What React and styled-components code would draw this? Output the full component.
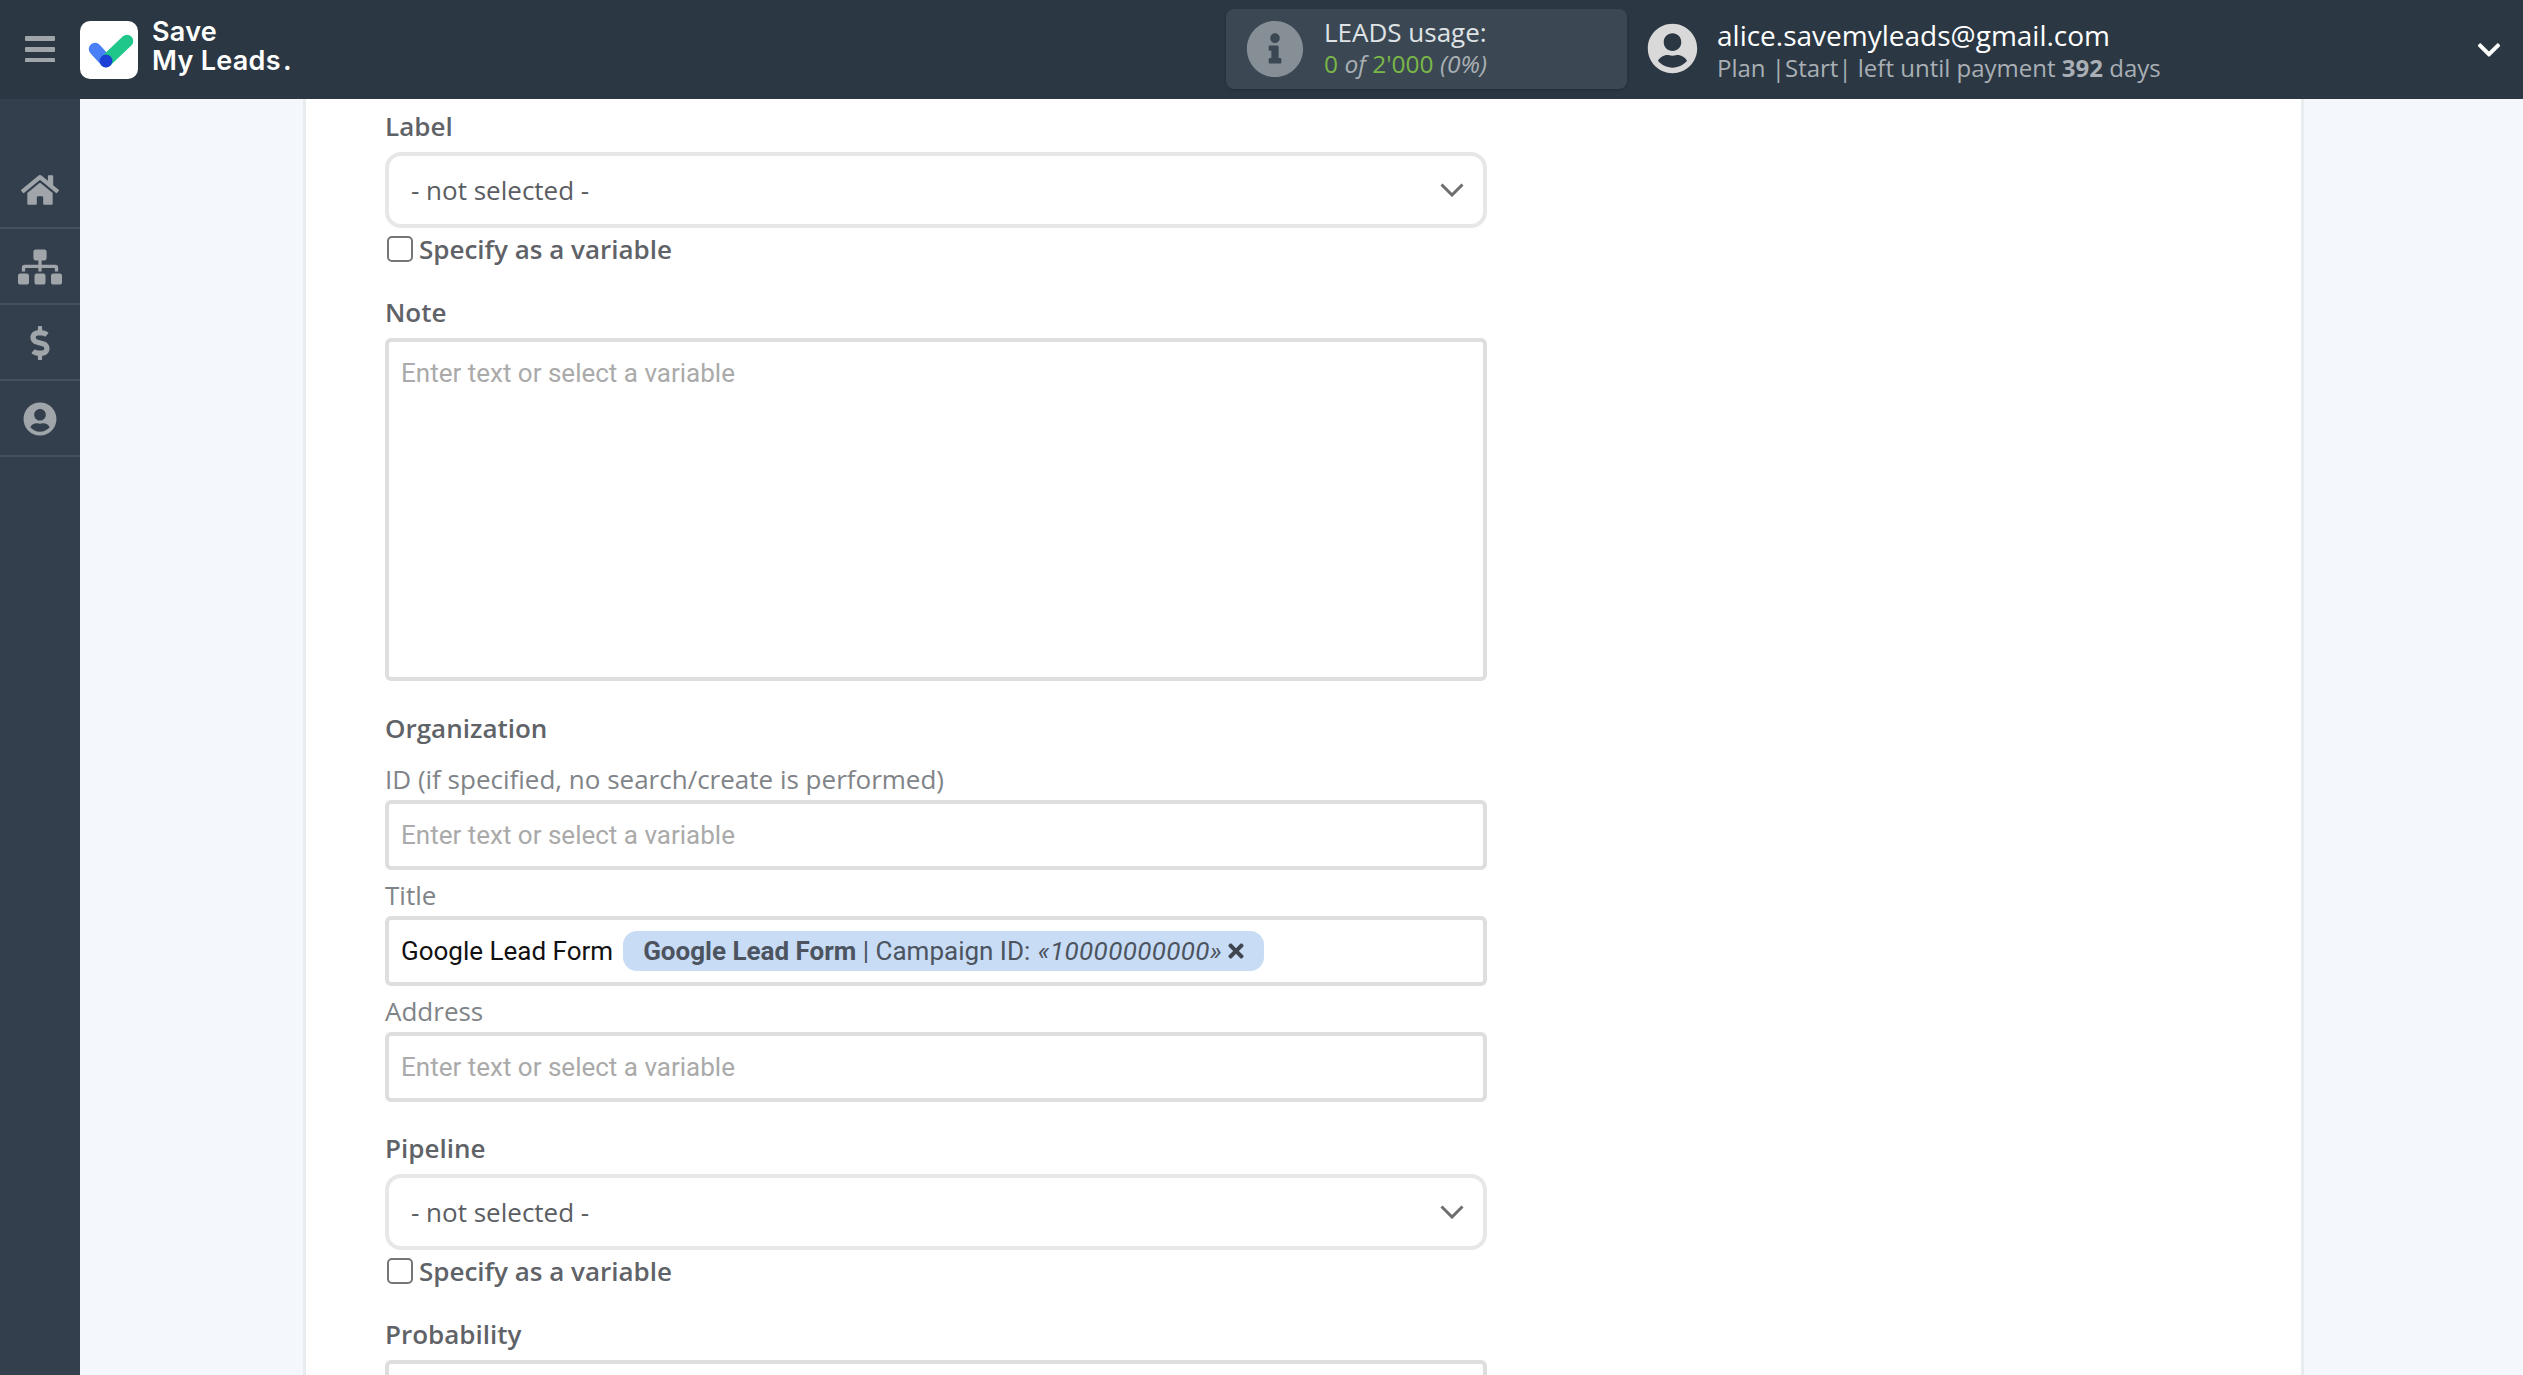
import React from 'react';
import styled, { createGlobalStyle } from 'styled-components';
import { FaHome, FaSitemap, FaDollarSign, FaUserCircle, FaInfoCircle, FaChevronDown, FaTimes } from 'react-icons/fa';

const Global = createGlobalStyle`
  html, body { margin: 0; height: 100%; overflow: hidden; background: #f4f7fc; }
  * { box-sizing: border-box; }
`;

const Page = styled.div`
  width: 2523px; height: 1375px; display: flex; flex-direction: column; overflow: hidden;
  font-family: "Open Sans", sans-serif;
`;
const Header = styled.header`
  height: 99px; flex: none; display: flex; align-items: center; background: #2b3743;
`;
const Burger = styled.svg`
  width: 30px; height: 26px; margin-left: 25px; margin-top: -1px; flex: none;
`;
const LogoMark = styled.svg`
  width: 58px; height: 58px; margin-left: 25px; flex: none;
`;
const LogoText = styled.div`
  margin: -8px 0 0 14px; width: 200px; color: #fff; font-family: Inter, sans-serif; font-weight: 600;
  font-size: 27px; line-height: 29px; letter-spacing: 0.3px; white-space: pre-line;
`;
const LogoDot = styled.span`
  margin-left: 2px;
`;
const Usage = styled.div`
  margin: -1px 0 0 874px; width: 401px; height: 80px; flex: none; border-radius: 8px; background: #3b4853;
  display: flex; align-items: center; padding-left: 20px; box-shadow: 0 1px 3px rgba(0,0,0,.2);
`;
const UsageIcon = styled(FaInfoCircle)`
  width: 58px; height: 58px; color: #868e96; flex: none;
`;
const UsageText = styled.div`
  margin: -3px 0 0 20px; display: flex; flex-direction: column; gap: 1px;
`;
const UsageTitle = styled.div`
  color: #dfe3e6; font-size: 26px; line-height: 32px;
`;
const UsageValue = styled.div`
  color: #a9afb4; font-size: 24.5px; line-height: 30px; font-style: italic;
`;
const Green = styled.span`
  color: #7ab648; font-style: normal;
`;
const Account = styled(FaUserCircle)`
  margin: -2px 0 0 20px; width: 51px; height: 51px; color: #d9d9d9; flex: none;
`;
const AccountText = styled.div`
  margin: -2px 0 0 19px; display: flex; flex-direction: column;
`;
const Email = styled.div`
  color: #fff; font-size: 28px; line-height: 38px;
`;
const Plan = styled.div`
  color: #a9afb4; font-size: 24px; line-height: 27px; white-space: pre;
`;
const Caret = styled(FaChevronDown)`
  margin-left: auto; margin-right: 21px; width: 26px; height: 26px; color: #fff; flex: none;
`;

const Body = styled.div`
  flex: 1; min-height: 0; display: flex;
`;
const Sidebar = styled.nav`
  width: 80px; flex: none; background: #343f4d; padding-top: 54px;
`;
const NavItem = styled.div`
  height: 76px; display: flex; align-items: center; justify-content: center; padding-top: 2px;
  border-bottom: 2px solid #46515e; color: #a0a5aa;
  &:first-child { padding-top: 0; }
`;
const Content = styled.main`
  flex: 1; min-width: 0; padding: 0 219px 0 223px;
`;
const Panel = styled.section`
  height: 100%; background: #fff; border-left: 3px solid #e9ecef; border-right: 3px solid #e9ecef;
  padding: 10px 0 0 79px; overflow: hidden;
`;
const Form = styled.div`
  width: 1102px; display: flex; flex-direction: column;
`;
const Caption = styled.div`
  height: 36px; margin: ${p => p.$top || 0}px 0 ${p => p.$bottom ?? 7}px; line-height: 34px;
  font-size: 26px; font-weight: 600; color: #5f6368;
`;
const SubCaption = styled.div`
  height: 30px; margin: ${p => p.$top || 0}px 0 5px; line-height: 29px;
  font-size: 26px; color: #808488;
`;
const SelectBox = styled.div`
  height: 76px; flex: none; border: 4px solid #e7e7e8; border-radius: 16px; display: flex; align-items: center;
  justify-content: space-between; padding: 0 23px 0 22px; font-size: 26px; color: #5a5d62; background: #fff;
`;
const Chevron = styled.svg`
  width: 24px; height: 14px; flex: none; margin-right: -4px;
`;
const CheckRow = styled.label`
  height: 26px; margin-top: 8px; display: flex; align-items: center; gap: 6px;
  font-size: 26px; line-height: 28px; font-weight: 600; color: #5f6368;
`;
const Check = styled.input`
  appearance: none; width: 26px; height: 26px; margin: 0 0 0 2px; flex: none;
  border: 2.5px solid #767676; border-radius: 5px; background: #fff;
`;
const TextField = styled.input`
  display: block; width: 100%; height: 70px; flex: none; border: 4px solid #dedede; border-radius: 6px; padding: 0 12px;
  font-family: Roboto, sans-serif; font-size: 26px; outline: none; background: #fff;
  &::placeholder { color: #aaaaaa; opacity: 1; }
`;
const TextArea = styled.textarea`
  display: block; width: 100%; height: 343px; flex: none; border: 4px solid #dedede; border-radius: 6px; padding: 16px 12px;
  font-family: Roboto, sans-serif; font-size: 26px; outline: none; resize: none; background: #fff;
  &::placeholder { color: #aaaaaa; opacity: 1; }
`;
const TagField = styled.div`
  height: 70px; flex: none; border: 4px solid #dedede; border-radius: 6px; padding: 0 12px; display: flex; align-items: center; gap: 10px;
  font-family: Roboto, sans-serif; font-size: 26px; color: #111; background: #fff;
`;
const Chip = styled.span`
  height: 40px; display: inline-flex; align-items: center; padding: 0 17px 0 20px; border-radius: 14px;
  background: #c8dcf5; color: #4c5460; white-space: pre;
`;
const ChipName = styled.b`
  font-weight: 700;
`;
const ChipValue = styled.i`
  font-style: italic; letter-spacing: 0.35px; margin-left: 1px;
`;
const ChipClose = styled(FaTimes)`
  width: 22px; height: 22px; margin-left: 3px; color: #3f4650;
`;
const Peek = styled.div`
  height: 70px; flex: none; border: 4px solid #dedede; border-radius: 6px; background: #fff;
`;

const CheckLine = () => (
  <CheckRow><Check type="checkbox" readOnly />Specify as a variable</CheckRow>
);
const Select = () => (
  <SelectBox>
    - not selected -
    <Chevron viewBox="0 0 24 14" fill="none" stroke="#6e6e6e" strokeWidth="3"><path d="M1.5 1.5 12 12 22.5 1.5" /></Chevron>
  </SelectBox>
);
const PLACE = 'Enter text or select a variable';

export default function App() {
  return (
    <Page>
      <Global />
      <Header>
        <Burger viewBox="0 0 30 26" fill="#a0a5aa">
          <rect y="0" width="30" height="5" rx="1" /><rect y="11" width="30" height="5" rx="1" /><rect y="22" width="30" height="4.5" rx="1" />
        </Burger>
        <LogoMark viewBox="0 0 58 58">
          <rect width="58" height="58" rx="10" fill="#fff" />
          <path d="M15 28 26 40" stroke="#4a80f7" strokeWidth="12.5" strokeLinecap="round" />
          <path d="M26 40 47 20" stroke="#20c78a" strokeWidth="12.5" strokeLinecap="round" />
          <circle cx="26" cy="40" r="6.4" fill="#1c3fd6" />
        </LogoMark>
        <LogoText>{'Save\nMy Leads'}<LogoDot>.</LogoDot></LogoText>
        <Usage>
          <UsageIcon />
          <UsageText>
            <UsageTitle>LEADS usage:</UsageTitle>
            <UsageValue><Green>0</Green> of <Green>2'000</Green> (0%)</UsageValue>
          </UsageText>
        </Usage>
        <Account />
        <AccountText>
          <Email>alice.savemyleads@gmail.com</Email>
          <Plan>Plan |Start| left until payment <b>392</b> days</Plan>
        </AccountText>
        <Caret />
      </Header>
      <Body>
        <Sidebar>
          <NavItem><FaHome size={38} /></NavItem>
          <NavItem><FaSitemap size={44} /></NavItem>
          <NavItem><FaDollarSign size={34} /></NavItem>
          <NavItem><FaUserCircle size={34} /></NavItem>
        </Sidebar>
        <Content>
          <Panel>
            <Form>
              <Caption>Label</Caption>
              <Select />
              <CheckLine />
              <Caption $top={33}>Note</Caption>
              <TextArea readOnly placeholder={PLACE} />
              <Caption $top={30} $bottom={18}>Organization</Caption>
              <SubCaption>ID (if specified, no search/create is performed)</SubCaption>
              <TextField readOnly placeholder={PLACE} />
              <SubCaption $top={11}>Title</SubCaption>
              <TagField>
                Google Lead Form
                <Chip><ChipName>Google Lead Form</ChipName> | Campaign ID: <ChipValue>«10000000000»</ChipValue><ChipClose /></Chip>
              </TagField>
              <SubCaption $top={11}>Address</SubCaption>
              <TextField readOnly placeholder={PLACE} />
              <Caption $top={29}>Pipeline</Caption>
              <Select />
              <CheckLine />
              <Caption $top={33}>Probability</Caption>
              <Peek />
            </Form>
          </Panel>
        </Content>
      </Body>
    </Page>
  );
}
